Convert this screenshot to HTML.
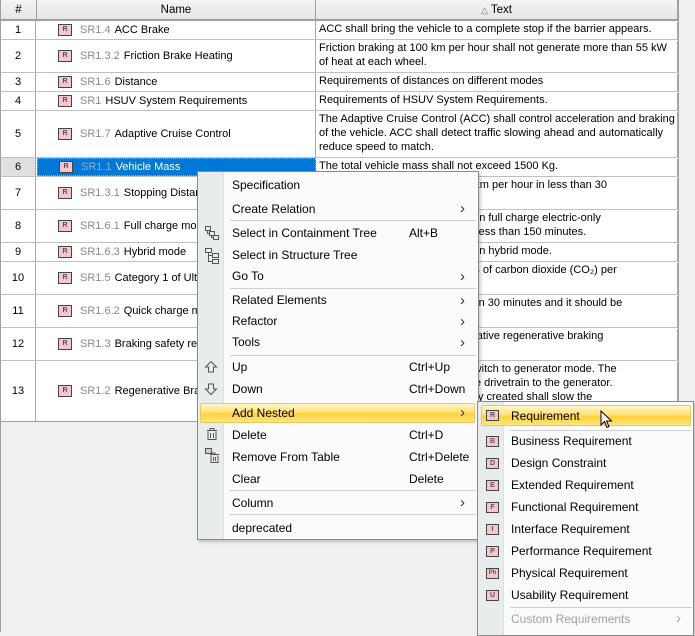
<!DOCTYPE html>
<html><head><meta charset="utf-8"><style>
*{margin:0;padding:0;box-sizing:border-box}
body{width:695px;height:632px;overflow:hidden;background:#f0f0f0;font-family:"Liberation Sans",Arial,sans-serif;font-size:11px;color:#000;position:relative}
.a{position:absolute;white-space:nowrap}
.hd{position:absolute;top:0;height:21px;background:linear-gradient(#f4f4f4,#e6e6e6);border-right:1px solid #a0a0a0;border-bottom:2px solid #a0a0a0;text-align:center;line-height:21px;font-size:11.5px}
.row{position:absolute;left:1px;width:677px;background:#fff;border-bottom:1px solid #c0c0c0}
.num{position:absolute;left:0;width:35px;top:0;bottom:0;border-right:1px solid #a8a8a8;display:flex;align-items:center;justify-content:center}
.nm{position:absolute;left:36px;width:279px;top:0;bottom:0;border-right:1px solid #a8a8a8;display:flex;align-items:center;padding-left:21px;white-space:nowrap;overflow:hidden}
.tx{position:absolute;left:316px;width:361px;top:1px;padding-left:2px;line-height:14px;border-right:1px solid #a8a8a8;bottom:0}
.ic{display:inline-block;flex:none;width:14px;height:12px;border:1px solid #444;background:#f6c6cc;font-size:7px;font-weight:bold;color:#555;text-align:center;line-height:10px;margin-right:8px;vertical-align:middle}
.sr{color:#8a8a8a;margin-right:4px}
.menu{position:absolute;background:#fbfbfb;border:1px solid #8a8a8a;box-shadow:2px 2px 3px rgba(0,0,0,.2)}
.gut{position:absolute;left:0;top:0;bottom:0;width:26px;background:#e8ecec;border-right:1px solid #dde}
.mi{position:absolute;font-size:12px;white-space:nowrap}
.sep{position:absolute;height:1px;background:#d0d0d0}
.arr{position:absolute;font-size:15px;line-height:14px;color:#333}
.hl{position:absolute;border:1px solid #e8c860;border-radius:2px;background:linear-gradient(#fff5c8 0%,#ffe27a 45%,#ffd23a 55%,#ffe680 100%)}
.si{position:absolute;width:13px;height:11px;border:1px solid #444;background:#f6c6cc;font-size:7px;font-weight:bold;color:#555;text-align:center;line-height:9px}
</style></head><body>
<div class="a" style="left:0;top:0;width:1px;height:632px;background:#a0a0a0"></div>
<div class="hd" style="left:1px;width:36px">#</div>
<div class="hd" style="left:37px;width:279px">Name</div>
<div class="hd" style="left:316px;width:362px"><span style="color:#777;font-size:9px">△</span> Text</div>
<div class="a" style="left:678px;top:0;width:17px;height:422px;background:#f0f0f0;border-left:1px solid #a0a0a0"></div>

<div class="row" style="top:21px;height:19px"><div class="num">1</div><div class="nm"><span class="ic">R</span><span class="sr">SR1.4</span>ACC Brake</div><div class="tx">ACC shall bring the vehicle to a complete stop if the barrier appears.</div></div>
<div class="row" style="top:40px;height:33px"><div class="num">2</div><div class="nm"><span class="ic">R</span><span class="sr">SR1.3.2</span>Friction Brake Heating</div><div class="tx">Friction braking at 100 km per hour shall not generate more than 55 kW<br>of heat at each wheel.</div></div>
<div class="row" style="top:73px;height:19px"><div class="num">3</div><div class="nm"><span class="ic">R</span><span class="sr">SR1.6</span>Distance</div><div class="tx">Requirements of distances on different modes</div></div>
<div class="row" style="top:92px;height:19px"><div class="num">4</div><div class="nm"><span class="ic">R</span><span class="sr">SR1</span>HSUV System Requirements</div><div class="tx">Requirements of HSUV System Requirements.</div></div>
<div class="row" style="top:111px;height:47px"><div class="num">5</div><div class="nm"><span class="ic">R</span><span class="sr">SR1.7</span>Adaptive Cruise Control</div><div class="tx">The Adaptive Cruise Control (ACC) shall control acceleration and braking<br>of the vehicle. ACC shall detect traffic slowing ahead and automatically<br>reduce speed to match.</div></div>
<div class="row" style="top:158px;height:19px"><div class="num" style="background:#e0e0e0">6</div><div class="nm" style="background:#0078d7;color:#fff;border:1px dotted #f0a040"><span class="ic">R</span><span class="sr" style="color:#9ab">SR1.1</span>Vehicle Mass</div><div class="tx">The total vehicle mass shall not exceed 1500 Kg.</div></div>
<div class="row" style="top:177px;height:33px"><div class="num">7</div><div class="nm"><span class="ic">R</span><span class="sr">SR1.3.1</span>Stopping Distance</div><div class="tx">The vehicle shall stop from 100 km per hour in less than 30<br>meters.</div></div>
<div class="row" style="top:210px;height:33px"><div class="num">8</div><div class="nm"><span class="ic">R</span><span class="sr">SR1.6.1</span>Full charge mode</div><div class="tx">The vehicle shall travel 100 km on full charge electric-only<br>mode and should be charged in less than 150 minutes.</div></div>
<div class="row" style="top:243px;height:19px"><div class="num">9</div><div class="nm"><span class="ic">R</span><span class="sr">SR1.6.3</span>Hybrid mode</div><div class="tx">The vehicle shall travel 700 km on hybrid mode.</div></div>
<div class="row" style="top:262px;height:33px"><div class="num">10</div><div class="nm"><span class="ic">R</span><span class="sr">SR1.5</span>Category 1 of Ultra Low</div><div class="tx">The vehicle shall emit 100 grams of carbon dioxide (CO₂) per<br>km.</div></div>
<div class="row" style="top:295px;height:33px"><div class="num">11</div><div class="nm"><span class="ic">R</span><span class="sr">SR1.6.2</span>Quick charge mode</div><div class="tx">The vehicle shall charge less than 30 minutes and it should be<br>enough.</div></div>
<div class="row" style="top:328px;height:33px"><div class="num">12</div><div class="nm"><span class="ic">R</span><span class="sr">SR1.3</span>Braking safety req</div><div class="tx">The vehicle shall provide cooperative regenerative braking<br>safety.</div></div>
<div class="row" style="top:361px;height:61px;border-bottom:1px solid #a0a0a0"><div class="num">13</div><div class="nm"><span class="ic">R</span><span class="sr">SR1.2</span>Regenerative Braking</div><div class="tx">When braking, the motor shall switch to generator mode. The<br>vehicle returns the energy via the drivetrain to the generator.<br>The resistance from the electricity created shall slow the</div></div>

<div class="menu" style="left:197px;top:171px;width:282px;height:369px">
<div class="gut"></div>
<svg class="a" style="left:6px;top:53px" width="16" height="40" viewBox="0 0 16 40" fill="none" stroke="#555" stroke-width="1"><rect x="1.5" y="1.5" width="5" height="4"/><rect x="5.5" y="6.5" width="5" height="4"/><rect x="9.5" y="10.5" width="5" height="4"/><path d="M3.5 5.5v3h2M7.5 10.5v2h2"/><rect x="1.5" y="23.5" width="6" height="4"/><rect x="8.5" y="28.5" width="6" height="4"/><rect x="8.5" y="34.5" width="6" height="4"/><path d="M4.5 27.5v9h4M4.5 30.5h4"/></svg>
<svg class="a" style="left:6px;top:188px" width="14" height="36" viewBox="0 0 14 36" fill="none" stroke="#555"><path d="M7 1.5L1.5 7h3v5h5V7h3z"/><path d="M7 34.5L1.5 29h3v-5h5v5h3z"/></svg>
<svg class="a" style="left:6px;top:255px" width="16" height="38" viewBox="0 0 16 38" fill="none" stroke="#555"><path d="M3 3.5h10M6 3.5v-2h4v2M4 4.5v8h8v-8M6.5 6v5M9.5 6v5"/><rect x="1.5" y="21.5" width="6" height="5" fill="#ccc"/><path d="M6 27.5h9M8 27.5v-1.5h3v1.5M7 28.5v7h7v-7M9.5 30v4M11.5 30v4"/></svg>
<div class="mi" style="left:34px;top:6px">Specification</div>
<div class="mi" style="left:34px;top:30px">Create Relation</div><div class="arr" style="left:262px;top:30px">›</div>
<div class="sep" style="left:32px;top:48px;width:246px"></div>
<div class="mi" style="left:34px;top:54px">Select in Containment Tree</div><div class="mi" style="left:211px;top:54px">Alt+B</div>
<div class="mi" style="left:34px;top:76px">Select in Structure Tree</div>
<div class="mi" style="left:34px;top:97px">Go To</div><div class="arr" style="left:262px;top:98px">›</div>
<div class="sep" style="left:32px;top:116px;width:246px"></div>
<div class="mi" style="left:34px;top:121px">Related Elements</div><div class="arr" style="left:262px;top:122px">›</div>
<div class="mi" style="left:34px;top:142px">Refactor</div><div class="arr" style="left:262px;top:143px">›</div>
<div class="mi" style="left:34px;top:163px">Tools</div><div class="arr" style="left:262px;top:164px">›</div>
<div class="sep" style="left:32px;top:183px;width:246px"></div>
<div class="mi" style="left:34px;top:188px">Up</div><div class="mi" style="left:211px;top:188px">Ctrl+Up</div>
<div class="mi" style="left:34px;top:210px">Down</div><div class="mi" style="left:211px;top:210px">Ctrl+Down</div>
<div class="hl" style="left:2px;top:231px;width:275px;height:20px"></div>
<div class="mi" style="left:34px;top:234px">Add Nested</div><div class="arr" style="left:262px;top:234px">›</div>
<div class="mi" style="left:34px;top:256px">Delete</div><div class="mi" style="left:211px;top:256px">Ctrl+D</div>
<div class="mi" style="left:34px;top:278px">Remove From Table</div><div class="mi" style="left:211px;top:278px">Ctrl+Delete</div>
<div class="mi" style="left:34px;top:300px">Clear</div><div class="mi" style="left:211px;top:300px">Delete</div>
<div class="sep" style="left:32px;top:318px;width:246px"></div>
<div class="mi" style="left:34px;top:324px">Column</div><div class="arr" style="left:262px;top:324px">›</div>
<div class="sep" style="left:32px;top:342px;width:246px"></div>
<div class="mi" style="left:34px;top:349px">deprecated</div>
</div>

<div class="menu" style="left:477px;top:401px;width:217px;height:235px">
<div class="gut"></div>
<div class="hl" style="left:3px;top:3px;width:210px;height:21px"></div>
<div class="si" style="left:8px;top:8px">R</div><div class="mi" style="left:33px;top:7px">Requirement</div>
<svg class="a" style="left:122px;top:8px" width="14" height="20" viewBox="0 0 14 20"><path d="M1 1v14l3.5-3.5 2.5 6 2-1-2.5-5.5h5z" fill="#fff" stroke="#000"/></svg>
<div class="sep" style="left:32px;top:28px;width:182px"></div>
<div class="si" style="left:8px;top:34px">B</div><div class="mi" style="left:33px;top:32px">Business Requirement</div>
<div class="si" style="left:8px;top:56px">D</div><div class="mi" style="left:33px;top:54px">Design Constraint</div>
<div class="si" style="left:8px;top:78px">E</div><div class="mi" style="left:33px;top:76px">Extended Requirement</div>
<div class="si" style="left:8px;top:100px">F</div><div class="mi" style="left:33px;top:98px">Functional Requirement</div>
<div class="si" style="left:8px;top:122px">I</div><div class="mi" style="left:33px;top:120px">Interface Requirement</div>
<div class="si" style="left:8px;top:144px">P</div><div class="mi" style="left:33px;top:142px">Performance Requirement</div>
<div class="si" style="left:8px;top:166px;font-size:6px">Ph</div><div class="mi" style="left:33px;top:164px">Physical Requirement</div>
<div class="si" style="left:8px;top:188px">U</div><div class="mi" style="left:33px;top:186px">Usability Requirement</div>
<div class="sep" style="left:32px;top:205px;width:182px"></div>
<div class="mi" style="left:33px;top:210px;color:#a0a0a0">Custom Requirements</div><div class="arr" style="left:198px;top:210px;color:#aaa">›</div>
</div>
</body></html>
